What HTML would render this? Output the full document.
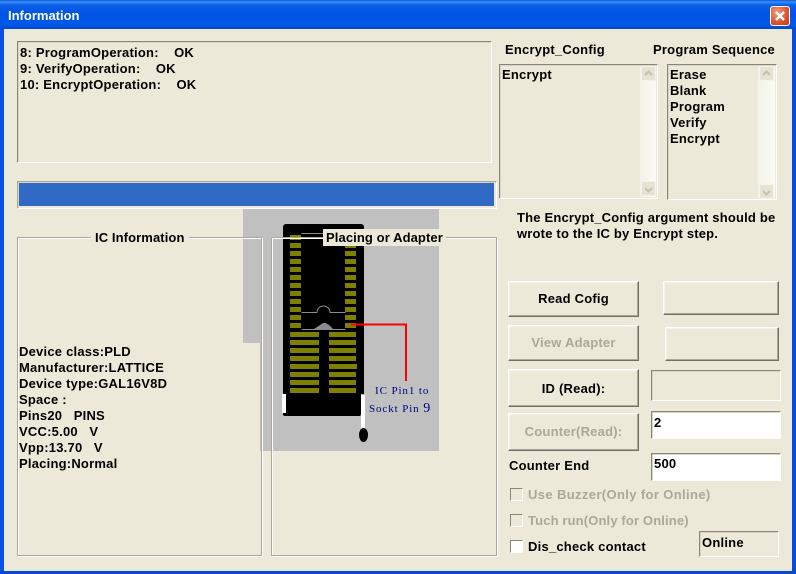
<!DOCTYPE html>
<html><head><meta charset="utf-8"><style>
html,body{margin:0;padding:0;background:#ece9d8}
#w{position:relative;width:796px;height:574px;overflow:hidden;background:#ece9d8;font:bold 13px/16px "Liberation Sans",sans-serif;letter-spacing:.22px;color:#000}
#w div{position:absolute;box-sizing:border-box}
.t{white-space:pre}
.d{color:#aca899}
.sunk{border:1px solid;border-color:#8a8678 #fff #fff #8a8678;box-shadow:inset 1px 1px 0 #d8d5c4}
.btn{background:#ece9d8;border:1px solid;border-color:#fff #716f64 #716f64 #fff;box-shadow:inset -1px -1px 0 #aca899,inset 1px 1px 0 #f5f3ea;text-align:center}
.group{border:1px solid #aca899;box-shadow:inset 1px 1px 0 #fff,1px 1px 0 #fff}
.cb{width:13px;height:13px;border:1px solid;border-color:#8a8678 #fff #fff #8a8678}
.sb{background:linear-gradient(90deg,#f3f1e8,#fbfaf6)}
.ar{background:#e6e3d2;border:1px solid #f5f4ec;width:15px;height:15px}
.m{color:#000080;font:11px/14px "Liberation Serif",serif;letter-spacing:.9px}
</style></head><body><div id="w">
<!-- frame -->
<div style="left:0;top:0;width:796px;height:29px;background:linear-gradient(180deg,#0a5ae0 0,#3b8cf5 2px,#0a5fe6 5px,#0054e3 14px,#0058ea 25px,#0048c8 29px)"></div>
<div style="left:0;top:29px;width:4px;height:545px;background:#0a50e8"></div>
<div style="left:792px;top:29px;width:4px;height:545px;background:#0a4ad8"></div>
<div style="left:0;top:571px;width:796px;height:3px;background:#0a48d0"></div>
<div class="t" style="left:8px;top:8px;color:#fff;letter-spacing:0">Information</div>
<div style="left:770px;top:6px;width:20px;height:20px;border:1px solid #fff;border-radius:3px;background:radial-gradient(circle at 35% 30%,#f0a080,#dc5030 60%,#c83818)"></div>
<svg style="position:absolute;left:770px;top:6px" width="20" height="20"><path d="M6 6L14 14M14 6L6 14" stroke="#fff" stroke-width="2.4"/></svg>

<!-- log -->
<div class="sunk" style="left:17px;top:41px;width:475px;height:122px"></div>
<div class="t" style="left:20px;top:45px">8: ProgramOperation:    OK</div>
<div class="t" style="left:20px;top:61px">9: VerifyOperation:    OK</div>
<div class="t" style="left:20px;top:77px">10: EncryptOperation:    OK</div>

<!-- progress -->
<div style="left:17px;top:181px;width:480px;height:28px;border:1px solid;border-color:#aca899 #fff #fff #aca899;box-shadow:inset 1px 1px 0 #d8d5c4"></div>
<div style="left:19px;top:183px;width:475px;height:23px;background:#316ac5"></div>

<!-- image -->
<div style="left:243px;top:209px;width:196px;height:134px;background:#c0c0c0"></div>
<div style="left:260px;top:343px;width:179px;height:108px;background:#c0c0c0"></div>
<div style="left:283px;top:224px;width:81px;height:170px;background:#000;border-radius:3px 3px 0 0"></div>
<div style="left:283px;top:394px;width:78px;height:22px;background:#000;border-radius:0 0 2px 2px"></div>
<div style="left:282px;top:394px;width:4px;height:19px;background:#fff"></div>
<div style="left:361px;top:395px;width:4px;height:35px;background:#fff"></div>
<div style="left:359px;top:428px;width:9px;height:14px;background:#000;border-radius:50%"></div>
<svg style="position:absolute;left:243px;top:209px" width="196" height="242">
<g fill="#808000">
<rect x="47" y="26" width="11" height="5"/><rect x="47" y="34" width="11" height="5"/><rect x="47" y="42" width="11" height="5"/><rect x="47" y="50" width="11" height="5"/><rect x="47" y="58" width="11" height="5"/><rect x="47" y="66" width="11" height="5"/><rect x="47" y="74" width="11" height="5"/><rect x="47" y="82" width="11" height="5"/><rect x="47" y="90" width="11" height="5"/><rect x="47" y="98" width="11" height="5"/><rect x="47" y="106" width="11" height="5"/><rect x="47" y="114" width="11" height="5"/>
<rect x="102" y="26" width="11" height="5"/><rect x="102" y="34" width="11" height="5"/><rect x="102" y="42" width="11" height="5"/><rect x="102" y="50" width="11" height="5"/><rect x="102" y="58" width="11" height="5"/><rect x="102" y="66" width="11" height="5"/><rect x="102" y="74" width="11" height="5"/><rect x="102" y="82" width="11" height="5"/><rect x="102" y="90" width="11" height="5"/><rect x="102" y="98" width="11" height="5"/><rect x="102" y="106" width="11" height="5"/><rect x="102" y="114" width="11" height="5"/>
<rect x="47" y="123" width="29" height="5"/><rect x="47" y="131" width="29" height="5"/><rect x="47" y="139" width="29" height="5"/><rect x="47" y="147" width="29" height="5"/><rect x="47" y="155" width="29" height="5"/><rect x="47" y="163" width="29" height="5"/><rect x="47" y="171" width="29" height="5"/><rect x="47" y="179" width="29" height="5"/>
<rect x="86" y="123" width="27" height="5"/><rect x="86" y="131" width="27" height="5"/><rect x="86" y="139" width="27" height="5"/><rect x="86" y="147" width="27" height="5"/><rect x="86" y="155" width="28" height="5"/><rect x="86" y="163" width="27" height="5"/><rect x="86" y="171" width="27" height="5"/><rect x="86" y="179" width="27" height="5"/>
</g>
<path d="M58.500 24.500H84M58.500 120.500H102.500M102.500 103.500H87A6.500 6.500 0 0 0 74 103.500H58.500" fill="none" stroke="#8c8c8c"/>
<path d="M71 120L80 114Q84 113 90 120Z" fill="#8c8c8c"/>
<path d="M108 115.500H163V172" fill="none" stroke="#f00" stroke-width="2"/>
</svg>
<div class="t m" style="left:375px;top:384px">IC Pin1 to</div>
<div class="t m" style="left:369px;top:402px">Sockt Pin <span style="font-size:14px;letter-spacing:0">9</span></div>

<!-- groups -->
<div class="group" style="left:17px;top:237px;width:245px;height:319px"></div>
<div class="group" style="left:271px;top:237px;width:226px;height:319px"></div>
<div class="t" style="left:91px;top:230px;background:#ece9d8;padding:0 4px;letter-spacing:.1px;height:15px">IC Information</div>
<div class="t" style="left:323px;top:229px;background:#ece9d8;padding:1px 3px 0;height:17px;letter-spacing:.1px">Placing or Adapter</div>
<div class="t" style="left:19px;top:344px">Device class:PLD
Manufacturer:LATTICE
Device type:GAL16V8D
Space :
Pins20   PINS
VCC:5.00   V
Vpp:13.70   V
Placing:Normal</div>

<!-- lists -->
<div class="t" style="left:505px;top:42px">Encrypt_Config</div>
<div class="t" style="left:653px;top:42px">Program Sequence</div>
<div class="sunk" style="left:499px;top:64px;width:159px;height:135px"></div>
<div class="sb" style="left:640px;top:66px;width:16px;height:131px"></div>
<div class="ar" style="left:641px;top:66px"></div><div class="ar" style="left:641px;top:181px"></div>
<svg style="position:absolute;left:641px;top:66px" width="15" height="130"><path d="M4 9L7.500 5.500L11 9M4 122L7.500 125.500L11 122" fill="none" stroke="#c4c1b0" stroke-width="2"/></svg>
<div class="t" style="left:502px;top:67px">Encrypt</div>
<div class="sunk" style="left:667px;top:64px;width:110px;height:136px"></div>
<div class="sb" style="left:758px;top:66px;width:17px;height:132px"></div>
<div class="ar" style="left:759px;top:66px"></div><div class="ar" style="left:759px;top:184px"></div>
<svg style="position:absolute;left:759px;top:66px" width="15" height="133"><path d="M4 9L7.500 5.500L11 9M4 125L7.500 128.500L11 125" fill="none" stroke="#c4c1b0" stroke-width="2"/></svg>
<div class="t" style="left:670px;top:67px">Erase
Blank
Program
Verify
Encrypt</div>
<div class="t" style="left:517px;top:210px;letter-spacing:.19px">The Encrypt_Config argument should be
wrote to the IC by Encrypt step.</div>

<!-- buttons -->
<div class="btn" style="left:508px;top:281px;width:131px;height:36px;line-height:33px">Read Cofig</div>
<div class="btn" style="left:663px;top:281px;width:116px;height:34px"></div>
<div class="btn d" style="left:508px;top:325px;width:131px;height:36px;line-height:33px">View Adapter</div>
<div class="btn" style="left:665px;top:327px;width:114px;height:34px"></div>
<div class="btn" style="left:508px;top:369px;width:131px;height:38px;line-height:37px">ID (Read):</div>
<div class="sunk" style="left:651px;top:370px;width:130px;height:31px"></div>
<div class="btn d" style="left:508px;top:413px;width:131px;height:38px;line-height:36px">Counter(Read):</div>
<div class="sunk" style="left:651px;top:411px;width:130px;height:28px;background:#fff"></div>
<div class="t" style="left:654px;top:415px">2</div>
<div class="t" style="left:509px;top:458px">Counter End</div>
<div class="sunk" style="left:651px;top:453px;width:130px;height:28px;background:#fff"></div>
<div class="t" style="left:654px;top:456px">500</div>
<div class="cb" style="left:510px;top:488px"></div>
<div class="t d" style="left:528px;top:487px;letter-spacing:.37px">Use Buzzer(Only for Online)</div>
<div class="cb" style="left:510px;top:514px"></div>
<div class="t d" style="left:528px;top:513px;letter-spacing:.14px">Tuch run(Only for Online)</div>
<div class="cb" style="left:510px;top:540px;background:#fff"></div>
<div class="t" style="left:528px;top:539px">Dis_check contact</div>
<div class="sunk" style="left:699px;top:531px;width:80px;height:26px"></div>
<div class="t" style="left:702px;top:535px">Online</div>
</div></body></html>
